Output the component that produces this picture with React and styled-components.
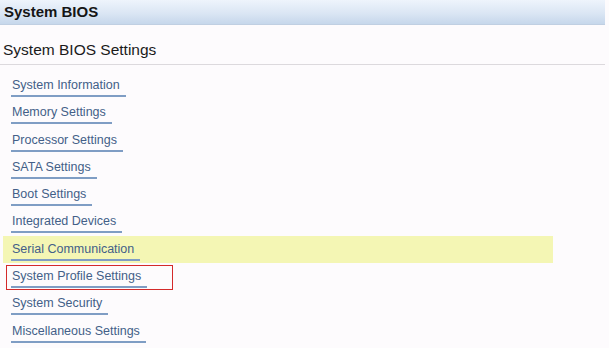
import React from "react";
import styled, { createGlobalStyle } from "styled-components";

const items = [
  "System Information",
  "Memory Settings",
  "Processor Settings",
  "SATA Settings",
  "Boot Settings",
  "Integrated Devices",
  "Serial Communication",
  "System Profile Settings",
  "System Security",
  "Miscellaneous Settings",
];

const HIGHLIGHT = "Serial Communication";
const FOCUSED = "System Profile Settings";

function App() {
  return (
    <>
      <GlobalStyle />
      <Page>
        <Header>System BIOS</Header>
        <SubTitle>System BIOS Settings</SubTitle>
        <List>
          {items.map((label) => (
            <Row key={label} highlight={label === HIGHLIGHT}>
              <FocusBox focused={label === FOCUSED}>
                <MenuLink>{label}</MenuLink>
              </FocusBox>
            </Row>
          ))}
        </List>
      </Page>
    </>
  );
}

const GlobalStyle = createGlobalStyle`
  html, body {
    margin: 0;
    padding: 0;
    background: #fdfbfd;
  }
  body {
    font-family: "Liberation Sans", Arial, sans-serif;
  }
`;

const Page = styled.div`
  width: 605px;
  height: 348px;
  overflow: hidden;
  background: #fdfbfd;
`;

const Header = styled.div`
  height: 25px;
  box-sizing: border-box;
  padding: 3px 0 0 4px;
  font-size: 15px;
  font-weight: 700;
  color: #151515;
  background: linear-gradient(to bottom, #eef4fc 0%, #dbe6f4 55%, #c6d7eb 100%);
  border-bottom: 1px solid #c0cfe2;
`;

const SubTitle = styled.div`
  height: 40px;
  box-sizing: border-box;
  padding: 16px 0 0 3px;
  font-size: 15.5px;
  color: #1a1a1a;
  border-bottom: 1px solid #dcd9dd;
`;

const List = styled.div`
  padding: 7px 0 0 3px;
  display: flex;
  flex-direction: column;
`;

const Row = styled.div`
  width: 550px;
  height: 27.3px;
  display: flex;
  align-items: stretch;
  background: ${({ highlight }) => (highlight ? "#f4f6b4" : "transparent")};
`;

const FocusBox = styled.div`
  width: 167px;
  box-sizing: border-box;
  margin-left: 3px;
  margin-top: 2px;
  padding-left: 4px;
  display: flex;
  align-items: flex-start;
  border: 1.5px solid ${({ focused }) => (focused ? "#d42a2a" : "transparent")};
`;

const MenuLink = styled.span`
  margin-top: 3px;
  padding: 0 6px 3px 1px;
  font-size: 12.5px;
  line-height: 14px;
  color: #435f88;
  border-bottom: 2px solid #7f9dc4;
  white-space: nowrap;
`;

export default App;
